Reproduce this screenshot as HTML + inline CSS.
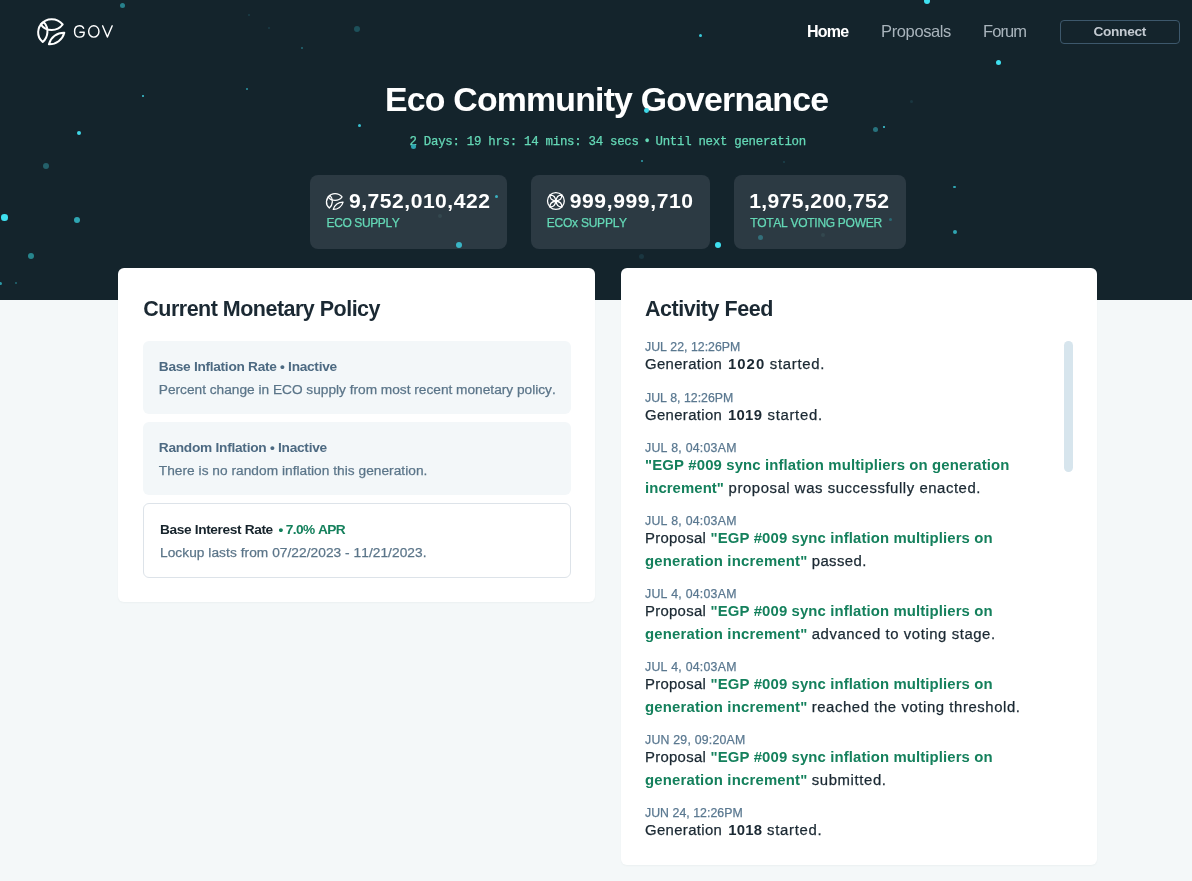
<!DOCTYPE html>
<html><head><meta charset="utf-8"><title>Eco Community Governance</title>
<style>
html,body{margin:0;padding:0}
body{width:1192px;height:881px;position:relative;overflow:hidden;background:#f4f8f9;font-family:"Liberation Sans",sans-serif}
.hdr{position:absolute;left:0;top:0;width:1192px;height:300px;background:#14242c}
.t{position:absolute;white-space:pre;line-height:0;font-kerning:none}
.stat{position:absolute;top:175px;height:74px;background:#2c3a43;border-radius:8px}
.card{position:absolute;top:267.7px;background:#fff;border-radius:6px;box-shadow:0 1px 2px rgba(20,40,60,.04)}
.box{position:absolute;left:143px;width:428px;height:73px;background:#f3f7f9;border-radius:6px}
.dot{position:absolute;border-radius:50%}
svg{position:absolute;left:0;top:0;overflow:visible}
</style></head><body>
<div class="hdr"></div>

<div class="stat" style="left:310px;width:197px"></div>
<div class="stat" style="left:531px;width:179px"></div>
<div class="stat" style="left:734px;width:172px"></div>
<div class="card" style="left:118.4px;width:476.8px;height:334.8px"></div>
<div class="card" style="left:620.5px;width:476.6px;height:597.3px"></div>
<div class="box" style="top:341px"></div>
<div class="box" style="top:422px"></div>
<div class="box" style="top:503px;height:73px;width:426px;background:#fff;border:1px solid #dde3e9"></div>
<div style="position:absolute;left:1064.3px;top:341px;width:8.4px;height:131px;border-radius:5px;background:#d7e5ed"></div>
<div style="position:absolute;left:1060px;top:20px;width:118px;height:22px;border:1px solid #3d586c;border-radius:4px"></div>
<svg width="1192" height="881" viewBox="0 0 1192 881">
<g fill="none" stroke="#fff" stroke-width="2.0" stroke-linejoin="round" stroke-linecap="round">
<path d="M40.7 24.4A14.15 14.15 0 0 1 62.7 24.5A13.6 13.6 0 0 1 40.7 24.4Z"/>
<path d="M43.8 22.2A13.9 13.9 0 0 1 42.7 42A12.2 12.2 0 0 1 43.8 22.2Z"/>
<path d="M64.3 32.7A15.5 15.5 0 0 1 48.9 44.3A15.5 15.5 0 0 1 64.3 32.7Z"/>
</g>
<g fill="none" stroke="#fff" stroke-width="1.45" stroke-linecap="round" stroke-linejoin="round">
<path d="M83.6 28.3Q82.6 25.7 79.6 25.7Q74.6 25.7 74.6 31.4Q74.6 37.1 79.6 37.1Q84.2 37.1 84.2 32.2L79.9 32.2"/>
<ellipse cx="93.8" cy="31.4" rx="5.15" ry="5.7"/>
<path d="M102.6 25.8L107.4 37L112.2 25.8"/>
</g>
<g transform="translate(302.19,181.31) scale(0.6360)"><g fill="none" stroke="#fff" stroke-width="2.0" stroke-linejoin="round" stroke-linecap="round">
<path d="M40.7 24.4A14.15 14.15 0 0 1 62.7 24.5A13.6 13.6 0 0 1 40.7 24.4Z"/>
<path d="M43.8 22.2A13.9 13.9 0 0 1 42.7 42A12.2 12.2 0 0 1 43.8 22.2Z"/>
<path d="M64.3 32.7A15.5 15.5 0 0 1 48.9 44.3A15.5 15.5 0 0 1 64.3 32.7Z"/>
</g></g>
<g fill="none" stroke="#fff" stroke-width="1.3">
<circle cx="555.9" cy="201" r="8.4"/>
<g transform="translate(555.9,201)">
<path d="M0 0Q-1.0 -6.4 -5.9 -5.9Q-6.4 -1.0 0 0Z"/>
<path d="M0 0Q1.0 -6.4 5.9 -5.9Q6.4 -1.0 0 0Z"/>
<path d="M0 0Q-1.0 6.4 -5.9 5.9Q-6.4 1.0 0 0Z"/>
<path d="M0 0Q1.0 6.4 5.9 5.9Q6.4 1.0 0 0Z"/>
</g></g>
</svg>
<div style="position:absolute;left:0;top:0;width:1192px;height:881px;will-change:transform">
<span class="t" style="left:807.0px;top:32px;font-size:16.0px;font-weight:700;color:#ffffff;letter-spacing:-0.733px;">Home</span>
<span class="t" style="left:881.1px;top:31px;font-size:16.5px;font-weight:400;color:#a9b4bc;letter-spacing:-0.388px;">Proposals</span>
<span class="t" style="left:983.0px;top:31px;font-size:16.5px;font-weight:400;color:#a9b4bc;letter-spacing:-0.9px;">Forum</span>
<span class="t" style="left:1093.5px;top:32px;font-size:13.7px;font-weight:700;color:#c3cad1;letter-spacing:-0.333px;">Connect</span>
<span class="t" style="left:385.1px;top:99px;font-size:33.8px;font-weight:700;color:#ffffff;letter-spacing:-0.787px;">Eco Community Governance</span>
<span class="t" style="left:409.5px;top:142px;font-size:12.4px;font-weight:400;color:#64d8b6;letter-spacing:-0.274px;font-family:'Liberation Mono',monospace;-webkit-text-stroke:0.25px #64d8b6;">2 Days: 19 hrs: 14 mins: 34 secs</span>
<span class="t" style="left:645.0px;top:141px;font-size:12.4px;font-weight:400;color:#64d8b6;letter-spacing:0px;-webkit-text-stroke:0.25px #64d8b6;">•</span>
<span class="t" style="left:655.5px;top:142px;font-size:12.4px;font-weight:400;color:#64d8b6;letter-spacing:-0.275px;font-family:'Liberation Mono',monospace;-webkit-text-stroke:0.25px #64d8b6;">Until next generation</span>
<span class="t" style="left:349.0px;top:201px;font-size:21.1px;font-weight:700;color:#ffffff;letter-spacing:0.5px;">9,752,010,422</span>
<span class="t" style="left:326.5px;top:223px;font-size:12.0px;font-weight:400;color:#64d8b6;letter-spacing:-0.378px;-webkit-text-stroke:0.25px #64d8b6;">ECO SUPPLY</span>
<span class="t" style="left:569.7px;top:201px;font-size:21.1px;font-weight:700;color:#ffffff;letter-spacing:0.61px;">999,999,710</span>
<span class="t" style="left:546.8px;top:223px;font-size:12.0px;font-weight:400;color:#64d8b6;letter-spacing:-0.24px;-webkit-text-stroke:0.25px #64d8b6;">ECOx SUPPLY</span>
<span class="t" style="left:749.2px;top:201px;font-size:21.1px;font-weight:700;color:#ffffff;letter-spacing:0.408px;">1,975,200,752</span>
<span class="t" style="left:750.2px;top:223px;font-size:12.0px;font-weight:400;color:#64d8b6;letter-spacing:-0.282px;-webkit-text-stroke:0.25px #64d8b6;">TOTAL VOTING POWER</span>
<span class="t" style="left:143.3px;top:309px;font-size:21.5px;font-weight:700;color:#1b2933;letter-spacing:-0.514px;">Current Monetary Policy</span>
<span class="t" style="left:158.8px;top:367px;font-size:13.7px;font-weight:700;color:#4d6a82;letter-spacing:-0.286px;">Base Inflation Rate • Inactive</span>
<span class="t" style="left:158.8px;top:390px;font-size:13.7px;font-weight:400;color:#5b7589;letter-spacing:-0.003px;-webkit-text-stroke:0.25px #5b7589;">Percent change in ECO supply from most recent monetary policy.</span>
<span class="t" style="left:158.8px;top:448px;font-size:13.7px;font-weight:700;color:#4d6a82;letter-spacing:-0.262px;">Random Inflation • Inactive</span>
<span class="t" style="left:158.8px;top:471px;font-size:13.7px;font-weight:400;color:#5b7589;letter-spacing:0.034px;-webkit-text-stroke:0.25px #5b7589;">There is no random inflation this generation.</span>
<span class="t" style="left:160.0px;top:530px;font-size:13.7px;font-weight:700;color:#16232b;letter-spacing:-0.365px;">Base Interest Rate</span>
<span class="t" style="left:278.4px;top:530px;font-size:13.7px;font-weight:700;color:#14805c;letter-spacing:-0.578px;">• 7.0% APR</span>
<span class="t" style="left:160.0px;top:553px;font-size:13.7px;font-weight:400;color:#5b7589;letter-spacing:0.059px;-webkit-text-stroke:0.25px #5b7589;">Lockup lasts from 07/22/2023 - 11/21/2023.</span>
<span class="t" style="left:645.0px;top:309px;font-size:21.5px;font-weight:700;color:#1b2933;letter-spacing:-0.458px;">Activity Feed</span>
<span class="t" style="left:645.0px;top:347px;font-size:12.3px;font-weight:400;color:#5a7890;letter-spacing:0.021px;-webkit-text-stroke:0.25px #5a7890;">JUL 22, 12:26PM</span>
<span class="t" style="left:645.0px;top:364px;font-size:14.9px;font-weight:400;color:#1b2933;letter-spacing:0.356px;-webkit-text-stroke:0.25px #1b2933;">Generation</span>
<span class="t" style="left:727.9px;top:364px;font-size:14.9px;font-weight:700;color:#1b2933;letter-spacing:1.067px;">1020</span>
<span class="t" style="left:769.8px;top:364px;font-size:14.9px;font-weight:400;color:#1b2933;letter-spacing:0.7px;-webkit-text-stroke:0.25px #1b2933;">started.</span>
<span class="t" style="left:645.0px;top:398px;font-size:12.3px;font-weight:400;color:#5a7890;letter-spacing:0.0px;-webkit-text-stroke:0.25px #5a7890;">JUL 8, 12:26PM</span>
<span class="t" style="left:645.0px;top:415px;font-size:14.9px;font-weight:400;color:#1b2933;letter-spacing:0.356px;-webkit-text-stroke:0.25px #1b2933;">Generation</span>
<span class="t" style="left:727.9px;top:415px;font-size:14.9px;font-weight:700;color:#1b2933;letter-spacing:0.3px;">1019</span>
<span class="t" style="left:767.5px;top:415px;font-size:14.9px;font-weight:400;color:#1b2933;letter-spacing:0.7px;-webkit-text-stroke:0.25px #1b2933;">started.</span>
<span class="t" style="left:645.0px;top:448px;font-size:12.3px;font-weight:400;color:#5a7890;letter-spacing:0.246px;-webkit-text-stroke:0.25px #5a7890;">JUL 8, 04:03AM</span>
<span class="t" style="left:645.0px;top:465px;font-size:14.9px;font-weight:700;color:#14805c;letter-spacing:0.133px;">&quot;EGP #009 sync inflation multipliers on generation</span>
<span class="t" style="left:645.0px;top:488px;font-size:14.9px;font-weight:700;color:#14805c;letter-spacing:0.078px;">increment&quot;</span>
<span class="t" style="left:728.6px;top:488px;font-size:14.9px;font-weight:400;color:#1b2933;letter-spacing:0.558px;-webkit-text-stroke:0.25px #1b2933;">proposal was successfully enacted.</span>
<span class="t" style="left:645.0px;top:521px;font-size:12.3px;font-weight:400;color:#5a7890;letter-spacing:0.246px;-webkit-text-stroke:0.25px #5a7890;">JUL 8, 04:03AM</span>
<span class="t" style="left:645.0px;top:538px;font-size:14.9px;font-weight:400;color:#1b2933;letter-spacing:0.286px;-webkit-text-stroke:0.25px #1b2933;">Proposal</span>
<span class="t" style="left:710.5px;top:538px;font-size:14.9px;font-weight:700;color:#14805c;letter-spacing:0.116px;">&quot;EGP #009 sync inflation multipliers on</span>
<span class="t" style="left:645.0px;top:561px;font-size:14.9px;font-weight:700;color:#14805c;letter-spacing:0.19px;">generation increment&quot;</span>
<span class="t" style="left:811.7px;top:561px;font-size:14.9px;font-weight:400;color:#1b2933;letter-spacing:0.433px;-webkit-text-stroke:0.25px #1b2933;">passed.</span>
<span class="t" style="left:645.0px;top:594px;font-size:12.3px;font-weight:400;color:#5a7890;letter-spacing:0.246px;-webkit-text-stroke:0.25px #5a7890;">JUL 4, 04:03AM</span>
<span class="t" style="left:645.0px;top:611px;font-size:14.9px;font-weight:400;color:#1b2933;letter-spacing:0.286px;-webkit-text-stroke:0.25px #1b2933;">Proposal</span>
<span class="t" style="left:710.5px;top:611px;font-size:14.9px;font-weight:700;color:#14805c;letter-spacing:0.116px;">&quot;EGP #009 sync inflation multipliers on</span>
<span class="t" style="left:645.0px;top:634px;font-size:14.9px;font-weight:700;color:#14805c;letter-spacing:0.19px;">generation increment&quot;</span>
<span class="t" style="left:811.7px;top:634px;font-size:14.9px;font-weight:400;color:#1b2933;letter-spacing:0.571px;-webkit-text-stroke:0.25px #1b2933;">advanced to voting stage.</span>
<span class="t" style="left:645.0px;top:667px;font-size:12.3px;font-weight:400;color:#5a7890;letter-spacing:0.246px;-webkit-text-stroke:0.25px #5a7890;">JUL 4, 04:03AM</span>
<span class="t" style="left:645.0px;top:684px;font-size:14.9px;font-weight:400;color:#1b2933;letter-spacing:0.286px;-webkit-text-stroke:0.25px #1b2933;">Proposal</span>
<span class="t" style="left:710.5px;top:684px;font-size:14.9px;font-weight:700;color:#14805c;letter-spacing:0.116px;">&quot;EGP #009 sync inflation multipliers on</span>
<span class="t" style="left:645.0px;top:707px;font-size:14.9px;font-weight:700;color:#14805c;letter-spacing:0.19px;">generation increment&quot;</span>
<span class="t" style="left:811.7px;top:707px;font-size:14.9px;font-weight:400;color:#1b2933;letter-spacing:0.579px;-webkit-text-stroke:0.25px #1b2933;">reached the voting threshold.</span>
<span class="t" style="left:645.0px;top:740px;font-size:12.3px;font-weight:400;color:#5a7890;letter-spacing:0.229px;-webkit-text-stroke:0.25px #5a7890;">JUN 29, 09:20AM</span>
<span class="t" style="left:645.0px;top:757px;font-size:14.9px;font-weight:400;color:#1b2933;letter-spacing:0.286px;-webkit-text-stroke:0.25px #1b2933;">Proposal</span>
<span class="t" style="left:710.5px;top:757px;font-size:14.9px;font-weight:700;color:#14805c;letter-spacing:0.116px;">&quot;EGP #009 sync inflation multipliers on</span>
<span class="t" style="left:645.0px;top:780px;font-size:14.9px;font-weight:700;color:#14805c;letter-spacing:0.19px;">generation increment&quot;</span>
<span class="t" style="left:811.7px;top:780px;font-size:14.9px;font-weight:400;color:#1b2933;letter-spacing:0.622px;-webkit-text-stroke:0.25px #1b2933;">submitted.</span>
<span class="t" style="left:645.0px;top:813px;font-size:12.3px;font-weight:400;color:#5a7890;letter-spacing:0.043px;-webkit-text-stroke:0.25px #5a7890;">JUN 24, 12:26PM</span>
<span class="t" style="left:645.0px;top:830px;font-size:14.9px;font-weight:400;color:#1b2933;letter-spacing:0.356px;-webkit-text-stroke:0.25px #1b2933;">Generation</span>
<span class="t" style="left:728.2px;top:830px;font-size:14.9px;font-weight:700;color:#1b2933;letter-spacing:0.2px;">1018</span>
<span class="t" style="left:767.1px;top:830px;font-size:14.9px;font-weight:400;color:#1b2933;letter-spacing:0.714px;-webkit-text-stroke:0.25px #1b2933;">started.</span>
</div>
<div class="dot" style="left:141.6px;top:94.9px;width:2.0px;height:2.0px;background:#3cc8d8"></div>
<div class="dot" style="left:246.3px;top:87.9px;width:2.0px;height:2.0px;background:#2a95a3"></div>
<div class="dot" style="left:77.2px;top:131.2px;width:4.0px;height:4.0px;background:#3fd6e6"></div>
<div class="dot" style="left:357.9px;top:123.9px;width:3.0px;height:3.0px;background:#38c0d0"></div>
<div class="dot" style="left:43.0px;top:163.0px;width:6.0px;height:6.0px;background:#24606a"></div>
<div class="dot" style="left:1.4px;top:214.4px;width:6.6px;height:6.6px;background:#3fe0f0"></div>
<div class="dot" style="left:74.2px;top:217.0px;width:6.0px;height:6.0px;background:#2fa5b2"></div>
<div class="dot" style="left:27.9px;top:253.0px;width:6.0px;height:6.0px;background:#27858d"></div>
<div class="dot" style="left:-1.5px;top:282.3px;width:3.0px;height:3.0px;background:#2b98a5"></div>
<div class="dot" style="left:14.8px;top:281.5px;width:2.0px;height:2.0px;background:#226a75"></div>
<div class="dot" style="left:120.3px;top:2.5px;width:5.0px;height:5.0px;background:#27808c"></div>
<div class="dot" style="left:353.7px;top:25.5px;width:6.0px;height:6.0px;background:#1d505a"></div>
<div class="dot" style="left:300.7px;top:47.3px;width:2.0px;height:2.0px;background:#236975"></div>
<div class="dot" style="left:247.7px;top:14.0px;width:2.0px;height:2.0px;background:#1a3f49"></div>
<div class="dot" style="left:268.0px;top:27.0px;width:2.0px;height:2.0px;background:#1a3d47"></div>
<div class="dot" style="left:923.8px;top:-2.0px;width:6.0px;height:6.0px;background:#3fe0f0"></div>
<div class="dot" style="left:699.3px;top:34.3px;width:3.0px;height:3.0px;background:#38c8d8"></div>
<div class="dot" style="left:996.3px;top:59.5px;width:5.0px;height:5.0px;background:#3fe0f0"></div>
<div class="dot" style="left:644.1px;top:108.1px;width:4.8px;height:4.8px;background:#3fd8e8"></div>
<div class="dot" style="left:873.1px;top:126.6px;width:5.0px;height:5.0px;background:#27727d"></div>
<div class="dot" style="left:882.6px;top:125.6px;width:2.0px;height:2.0px;background:#3fd0e0"></div>
<div class="dot" style="left:641.2px;top:160.4px;width:2.0px;height:2.0px;background:#2fa0ae"></div>
<div class="dot" style="left:782.8px;top:161.4px;width:2.0px;height:2.0px;background:#1b424c"></div>
<div class="dot" style="left:953.4px;top:186.0px;width:2.4px;height:2.4px;background:#2fa5b2"></div>
<div class="dot" style="left:952.6px;top:229.9px;width:4.0px;height:4.0px;background:#2fa5b2"></div>
<div class="dot" style="left:888.5px;top:218.0px;width:3.0px;height:3.0px;background:#2a6a75"></div>
<div class="dot" style="left:757.9px;top:234.9px;width:5.0px;height:5.0px;background:#336f7a"></div>
<div class="dot" style="left:820.5px;top:232.9px;width:4.0px;height:4.0px;background:#33474f"></div>
<div class="dot" style="left:714.5px;top:241.6px;width:6.4px;height:6.4px;background:#3fe0f0"></div>
<div class="dot" style="left:639.2px;top:254.3px;width:5.0px;height:5.0px;background:#1a3640"></div>
<div class="dot" style="left:909.9px;top:100.3px;width:3.0px;height:3.0px;background:#1a3640"></div>
<div class="dot" style="left:494.5px;top:194.5px;width:3.0px;height:3.0px;background:#3ab0bf"></div>
<div class="dot" style="left:455.5px;top:242.0px;width:6.0px;height:6.0px;background:#3ab5c5"></div>
<div class="dot" style="left:437.8px;top:214.2px;width:4.0px;height:4.0px;background:#34474f"></div>
<div class="dot" style="left:410.6px;top:144.0px;width:5.0px;height:5.0px;background:#2fa5b0"></div>
</body></html>
